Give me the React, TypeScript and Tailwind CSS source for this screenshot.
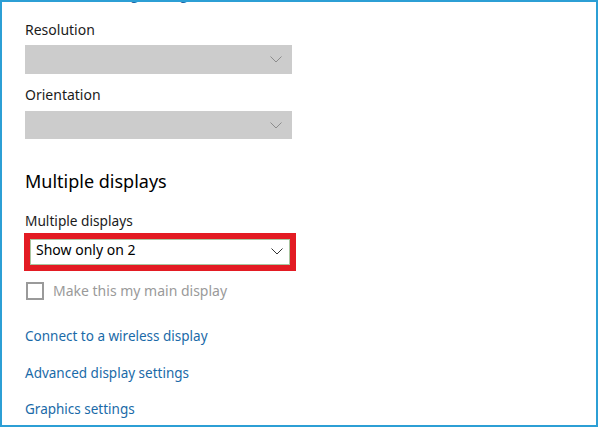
import React from "react";

function Chevron({ color }: { color: string }) {
  return (
    <svg width="12" height="7" viewBox="0 0 12 7" fill="none" className="shrink-0">
      <polyline points="0.5,0.5 6,6 11.5,0.5" stroke={color} strokeWidth="1" fill="none" />
    </svg>
  );
}

export default function App() {
  return (
    <div className="w-[600px] h-[428px] bg-white">
      <div
        className="w-[598px] h-[427px] border-2 border-[#2c9fd5] overflow-hidden flex flex-col pl-[23px] text-[14px] leading-[20px] text-[#1b1b1b]"
        style={{ fontFamily: '"Noto Sans", "Open Sans", sans-serif' }}
      >
        <div className="mt-[-18px] h-[20px] text-[#1a6aa8] whitespace-nowrap">Advanced scaling settings</div>

        <div className="mt-[16px] h-[20px]">Resolution</div>
        <div className="mt-[5px] w-[267px] h-[29px] bg-[#cccccc] flex items-center justify-end pr-[10px]">
          <Chevron color="#8c8c8c" />
        </div>

        <div className="mt-[11px] h-[20px]">Orientation</div>
        <div className="mt-[6px] w-[267px] h-[28px] bg-[#cccccc] flex items-center justify-end pr-[10px]">
          <Chevron color="#8c8c8c" />
        </div>

        <div className="mt-[30px] h-[24px] text-[18px] leading-[24px] text-black">Multiple displays</div>

        <div className="mt-[18px] h-[20px] text-[13.7px]">Multiple displays</div>
        <div className="mt-[2px] -ml-px w-[272px] h-[38px] border-[6px] border-[#e31b23]">
          <div className="h-full border border-[#a9c6a1] bg-white flex items-start justify-between pl-[5px] pr-[6px]">
            <span className="text-black">Show only on 2</span>
            <span className="mt-[8px]">
              <Chevron color="#333333" />
            </span>
          </div>
        </div>

        <div className="mt-[11px] flex items-center gap-[9px] h-[18px]">
          <div className="w-[18px] h-[18px] border-2 border-[#9a9a9a] ml-px" />
          <span className="text-[#9a9a9a]">Make this my main display</span>
        </div>

        <div className="mt-[26px] h-[20px] text-[13.5px] text-[#1a6aa8]">Connect to a wireless display</div>
        <div className="mt-[17px] h-[20px] text-[13.5px] text-[#1a6aa8]">Advanced display settings</div>
        <div className="mt-[16px] h-[20px] text-[13.5px] text-[#1a6aa8]">Graphics settings</div>
      </div>
    </div>
  );
}
